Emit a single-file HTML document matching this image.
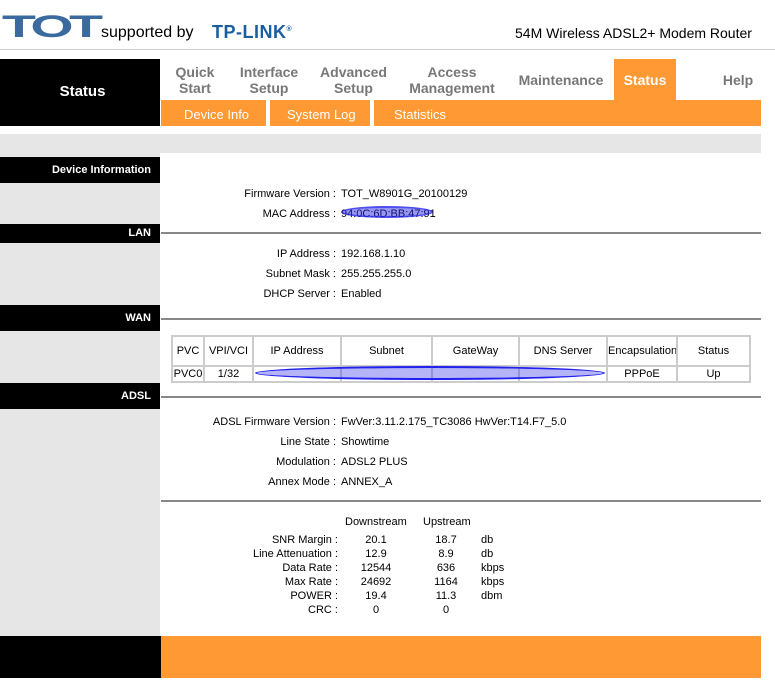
<!DOCTYPE html><html><head><style>
body{margin:0;width:775px;height:692px;background:#fff;font-family:"Liberation Sans",Arial,sans-serif;position:relative;overflow:hidden}
div,span{position:absolute}
.t{font-size:11px;color:#000;white-space:nowrap}
.lbl{background:#000;color:#fff;font-weight:bold;font-size:11px;text-align:right;padding-right:9px;box-sizing:border-box;width:160px;left:0}
.hr{background:#888;height:2px;left:161px;width:600px}
.nav{color:#777;font-weight:bold;font-size:14px;text-align:center;line-height:16px}
.sub{color:#fff;font-size:13px;top:107px}
.r{text-align:right}
table{position:absolute;border-collapse:collapse;font-size:11px;table-layout:fixed}
td{border:2px solid #ccc;text-align:center;padding:0;overflow:hidden;white-space:nowrap}
</style></head><body>
<div style="left:2px;top:9px;font:bold 37px 'Liberation Sans',sans-serif;color:#3a6a9e;letter-spacing:-3px;transform:scale(1.5,0.85);transform-origin:left top">TOT</div>
<div class="t" style="left:101px;top:24px;font-size:16px">supported by</div>
<div style="left:212px;top:22px;font:bold 18px 'Liberation Sans',sans-serif;color:#1b5e9e;letter-spacing:0.5px">TP-LINK<sup style="font-size:7px">®</sup></div>
<div class="t" style="left:515px;top:25px;font-size:14px">54M Wireless ADSL2+ Modem Router</div>
<div style="left:0;top:49px;width:775px;height:1px;background:#ccc"></div>
<div style="left:0;top:59px;width:160px;height:67px;background:#000"></div>
<div style="left:0;top:83px;width:165px;text-align:center;color:#fff;font-weight:bold;font-size:15px">Status</div>
<div class="nav" style="left:165px;top:64px;width:60px">Quick<br>Start</div>
<div class="nav" style="left:234px;top:64px;width:70px">Interface<br>Setup</div>
<div class="nav" style="left:316px;top:64px;width:75px">Advanced<br>Setup</div>
<div class="nav" style="left:405px;top:64px;width:94px">Access<br>Management</div>
<div class="nav" style="left:516px;top:72px;width:90px">Maintenance</div>
<div style="left:614px;top:59px;width:62px;height:41px;background:#f93"></div>
<div class="nav" style="left:614px;top:72px;width:62px;color:#fff">Status</div>
<div class="nav" style="left:716px;top:72px;width:44px">Help</div>
<div style="left:161px;top:100px;width:600px;height:26px;background:#f93"></div>
<div style="left:266px;top:100px;width:4px;height:26px;background:#fff"></div>
<div style="left:370px;top:100px;width:4px;height:26px;background:#fff"></div>
<div class="sub" style="left:184px">Device Info</div>
<div class="sub" style="left:287px">System Log</div>
<div class="sub" style="left:394px">Statistics</div>
<div style="left:0;top:134px;width:761px;height:19px;background:#e6e6e6"></div>
<div style="left:0;top:153px;width:160px;height:483px;background:#e6e6e6"></div>
<div class="lbl" style="top:157px;height:26px;line-height:26px">Device Information</div>
<div class="t r" style="left:160px;width:176px;top:188px">Firmware Version :</div><div class="t" style="left:341px;top:188px">TOT_W8901G_20100129</div>
<div class="t r" style="left:160px;width:176px;top:208px">MAC Address :</div><div class="t" style="left:341px;top:208px">94:0C:6D:BB:47:91</div>
<div style="left:341px;top:206px;width:92px;height:12px;border:2px solid #22e;border-radius:50%;opacity:.8;box-sizing:border-box;background:rgba(40,40,230,.6)"></div>
<div class="lbl" style="top:224px;height:19px;line-height:19px">LAN</div><div class="hr" style="top:232px"></div>
<div class="t r" style="left:160px;width:176px;top:248px">IP Address :</div><div class="t" style="left:341px;top:248px">192.168.1.10</div>
<div class="t r" style="left:160px;width:176px;top:268px">Subnet Mask :</div><div class="t" style="left:341px;top:268px">255.255.255.0</div>
<div class="t r" style="left:160px;width:176px;top:288px">DHCP Server :</div><div class="t" style="left:341px;top:288px">Enabled</div>
<div class="lbl" style="top:305px;height:26px;line-height:26px">WAN</div><div class="hr" style="top:318px"></div>
<table style="left:171px;top:335px;width:578px">
<colgroup><col style="width:32px"><col style="width:49px"><col style="width:88px"><col style="width:91px"><col style="width:87px"><col style="width:88px"><col style="width:70px"><col style="width:73px"></colgroup>
<tr style="height:30px"><td>PVC</td><td>VPI/VCI</td><td>IP Address</td><td>Subnet</td><td>GateWay</td><td>DNS Server</td><td>Encapsulation</td><td>Status</td></tr>
<tr style="height:16px"><td>PVC0</td><td>1/32</td><td></td><td></td><td></td><td></td><td>PPPoE</td><td>Up</td></tr></table>
<div style="left:255px;top:366px;width:350px;height:14px;border:2px solid #22e;border-radius:50%;box-sizing:border-box;background:rgba(40,40,230,.35)"></div>
<div class="lbl" style="top:383px;height:26px;line-height:26px">ADSL</div><div class="hr" style="top:396px"></div>
<div class="t r" style="left:160px;width:176px;top:416px">ADSL Firmware Version :</div><div class="t" style="left:341px;top:416px">FwVer:3.11.2.175_TC3086 HwVer:T14.F7_5.0</div>
<div class="t r" style="left:160px;width:176px;top:436px">Line State :</div><div class="t" style="left:341px;top:436px">Showtime</div>
<div class="t r" style="left:160px;width:176px;top:456px">Modulation :</div><div class="t" style="left:341px;top:456px">ADSL2 PLUS</div>
<div class="t r" style="left:160px;width:176px;top:476px">Annex Mode :</div><div class="t" style="left:341px;top:476px">ANNEX_A</div>
<div class="hr" style="top:500px"></div>
<div class="t" style="left:345px;top:516px">Downstream</div><div class="t" style="left:423px;top:516px">Upstream</div>
<div class="t r" style="left:160px;width:178px;top:533px;line-height:14px">SNR Margin :<br>Line Attenuation :<br>Data Rate :<br>Max Rate :<br>POWER :<br>CRC :</div>
<div class="t" style="left:346px;width:60px;text-align:center;top:533px;line-height:14px">20.1<br>12.9<br>12544<br>24692<br>19.4<br>0</div>
<div class="t" style="left:416px;width:60px;text-align:center;top:533px;line-height:14px">18.7<br>8.9<br>636<br>1164<br>11.3<br>0</div>
<div class="t" style="left:481px;top:533px;line-height:14px">db<br>db<br>kbps<br>kbps<br>dbm</div>
<div style="left:0;top:636px;width:161px;height:42px;background:#000"></div>
<div style="left:161px;top:636px;width:600px;height:42px;background:#f93"></div>
</body></html>
